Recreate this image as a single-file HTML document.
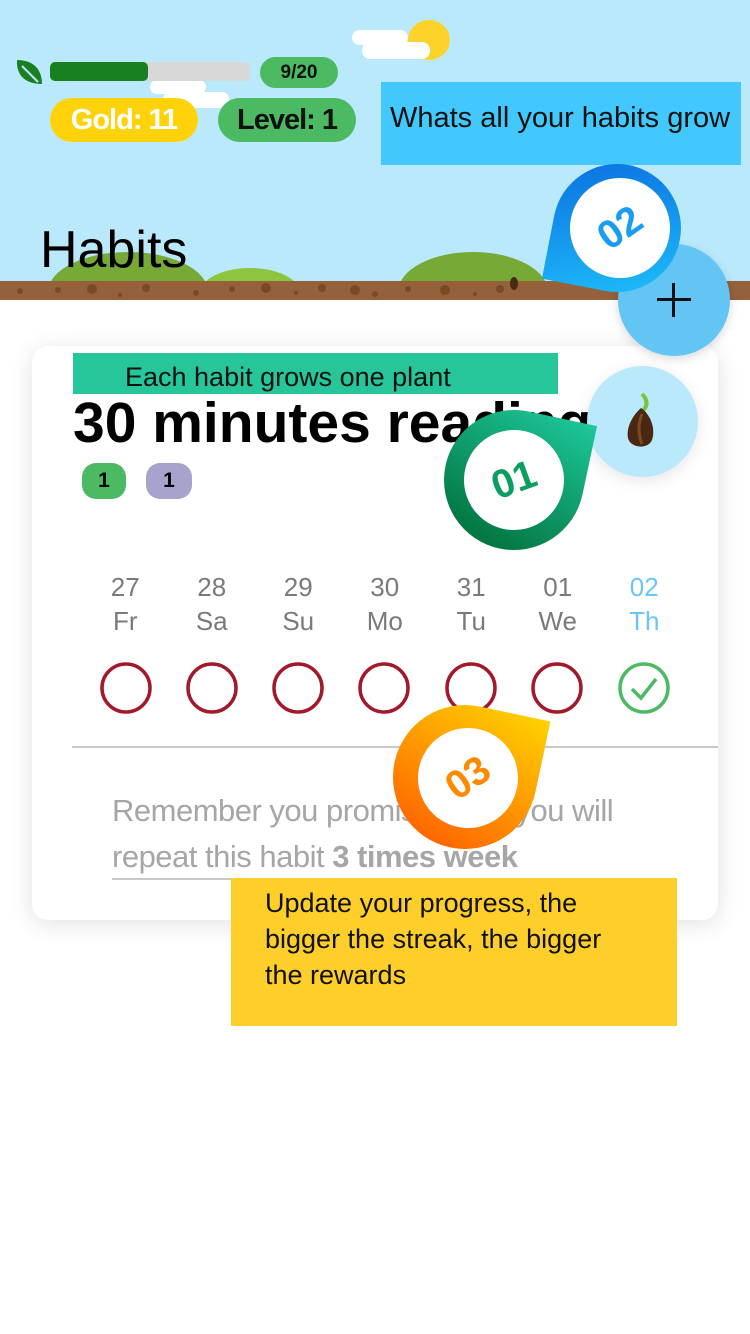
<!DOCTYPE html>
<html><head><meta charset="utf-8"><style>
*{margin:0;padding:0;box-sizing:border-box}
body{width:750px;height:1334px;position:relative;overflow:hidden;background:#fff;font-family:"Liberation Sans",sans-serif}
.abs{position:absolute}
.drop{position:absolute}
.inner{position:absolute;border-radius:50%;background:#fff;display:flex;align-items:center;justify-content:center;font-weight:bold;font-size:40px}
</style></head><body>
<div class="abs" style="left:0;top:0;width:750px;height:300px;background:#bbe9fc;overflow:hidden">
<div class="abs" style="left:408px;top:20px;width:42px;height:40px;border-radius:50%;background:#fdd22a"></div>
<div class="abs" style="left:352px;top:30px;width:56px;height:15px;border-radius:8px;background:#fff"></div>
<div class="abs" style="left:362px;top:42px;width:68px;height:17px;border-radius:8px;background:#fff"></div>
<div class="abs" style="left:150px;top:80px;width:56px;height:14px;border-radius:7px;background:#fff"></div>
<div class="abs" style="left:163px;top:92px;width:66px;height:16px;border-radius:7px;background:#fff"></div>
<div class="abs" style="left:48px;top:252px;width:160px;height:80px;border-radius:50%;background:#76a936"></div>
<div class="abs" style="left:200px;top:268px;width:100px;height:50px;border-radius:50%;background:#8cc63e"></div>
<div class="abs" style="left:398px;top:252px;width:150px;height:80px;border-radius:50%;background:#76a936"></div>
<div class="abs" style="left:0;top:281px;width:750px;height:19px;background:#94613a"></div>
<svg class="abs" style="left:0;top:281px" width="750" height="19"><g fill="#7a4a26"><circle cx="20" cy="10" r="3"/><circle cx="58" cy="9" r="3"/><circle cx="92" cy="8" r="5"/><circle cx="120" cy="14" r="2"/><circle cx="146" cy="7" r="4"/><circle cx="196" cy="12" r="3"/><circle cx="232" cy="8" r="3"/><circle cx="266" cy="7" r="5"/><circle cx="296" cy="12" r="2"/><circle cx="322" cy="7" r="4"/><circle cx="355" cy="9" r="5"/><circle cx="375" cy="13" r="3"/><circle cx="408" cy="8" r="3"/><circle cx="445" cy="9" r="5"/><circle cx="475" cy="13" r="2"/><circle cx="500" cy="8" r="4"/></g></svg>
<div class="abs" style="left:510px;top:277px;width:8px;height:13px;border-radius:50%;background:#4a2a12"></div>
</div>
<svg class="abs" style="left:14px;top:58px" width="30" height="28" viewBox="0 0 30 28"><path d="M3 2 C20 2 28 12 28 26 C12 26 2 18 3 2Z" fill="#198022"/><path d="M8 8 L24 24" stroke="#bbe9fc" stroke-width="2"/></svg>
<div class="abs" style="left:50px;top:62px;width:200px;height:19px;border-radius:5px;background:#d8d8d8"></div>
<div class="abs" style="left:50px;top:62px;width:98px;height:19px;border-radius:5px;background:#198022"></div>
<div class="abs" style="left:260px;top:57px;width:78px;height:31px;border-radius:16px;background:#4cb963;font-weight:bold;font-size:19px;text-align:center;line-height:31px;color:#111">9/20</div>
<div class="abs" style="left:50px;top:98px;width:148px;height:44px;border-radius:22px;background:#ffd20a;color:#fff;font-weight:bold;font-size:29px;text-align:center;line-height:44px;letter-spacing:-1px">Gold: 11</div>
<div class="abs" style="left:218px;top:98px;width:138px;height:44px;border-radius:22px;background:#4cb963;color:#111;font-weight:bold;font-size:29px;text-align:center;line-height:44px;letter-spacing:-1px">Level: 1</div>
<div class="abs" style="left:381px;top:82px;width:360px;height:83px;background:#42c8fc;font-size:29px;color:#111;padding:20px 0 0 9px;white-space:nowrap">Whats all your habits grow</div>
<div class="abs" style="left:40px;top:220px;font-size:52px;color:#000">Habits</div>
<div class="abs" style="left:32px;top:346px;width:686px;height:574px;border-radius:16px;background:#fff;box-shadow:0 4px 24px rgba(0,0,0,0.12)"></div>
<div class="abs" style="left:73px;top:353px;width:485px;height:41px;background:#27c59a;font-size:27px;color:#111;padding:9px 0 0 52px;white-space:nowrap">Each habit grows one plant</div>
<div class="abs" style="left:73px;top:390px;font-size:57px;font-weight:bold;color:#000">30 minutes reading</div>
<div class="abs" style="left:82px;top:463px;width:44px;height:36px;border-radius:14px;background:#4cb963;font-weight:bold;font-size:21px;text-align:center;line-height:36px">1</div>
<div class="abs" style="left:146px;top:463px;width:46px;height:36px;border-radius:14px;background:#a6a3cc;font-weight:bold;font-size:21px;text-align:center;line-height:36px">1</div>
<div class="abs" style="left:82px;top:570px;width:606px;display:flex;font-size:26px;color:#7a7a7a;text-align:center;line-height:34px">
<div style="width:86.5px">27<br>Fr</div><div style="width:86.5px">28<br>Sa</div><div style="width:86.5px">29<br>Su</div><div style="width:86.5px">30<br>Mo</div><div style="width:86.5px">31<br>Tu</div><div style="width:86.5px">01<br>We</div><div style="width:86.5px;color:#6bc6f3">02<br>Th</div></div>
<svg class="abs" style="left:0;top:655px" width="750" height="70">
<g fill="none" stroke="#a2192a" stroke-width="3.5">
<circle cx="126" cy="33" r="24"/><circle cx="212" cy="33" r="24"/><circle cx="298" cy="33" r="24"/><circle cx="384" cy="33" r="24"/><circle cx="471" cy="33" r="24"/><circle cx="557" cy="33" r="24"/></g>
<circle cx="644" cy="33" r="24" fill="none" stroke="#4cb963" stroke-width="3.5"/>
<path d="M632 34 L641 43 L656 24" fill="none" stroke="#4cb963" stroke-width="3.5"/>
</svg>
<div class="abs" style="left:72px;top:746px;width:646px;height:2px;background:#c8c8cc"></div>
<div class="abs" style="left:112px;top:788px;width:560px;font-size:31px;line-height:46px;color:#a6a6a6;letter-spacing:-0.5px">Remember you promised that you will repeat this habit <b>3 times week</b></div>
<div class="abs" style="left:112px;top:878px;width:560px;height:2px;background:#c8c8cc"></div>
<div class="abs" style="left:618px;top:244px;width:112px;height:112px;border-radius:50%;background:#62c5f3;box-shadow:0 3px 10px rgba(0,0,0,0.15)"></div>
<div class="abs" style="left:657px;top:298px;width:34px;height:3px;background:#111"></div>
<div class="abs" style="left:672px;top:283px;width:3px;height:34px;background:#111"></div>
<div class="abs" style="left:587px;top:366px;width:111px;height:111px;border-radius:50%;background:#bbe9fc;box-shadow:0 4px 16px rgba(0,0,0,0.1)"></div>
<svg class="abs" style="left:624px;top:392px" width="36" height="60" viewBox="0 0 36 60"><path d="M18 2 C24 8 24 14 18 20" stroke="#7cc23a" stroke-width="4" fill="none"/><path d="M17 16 C8 24 2 36 4 46 C6 56 24 58 28 48 C32 36 26 22 17 16Z" fill="#4a2710"/><path d="M18 22 C14 32 14 42 18 52" stroke="#7a4a22" stroke-width="3" fill="none"/></svg>
<div class="drop" style="left:553px;top:164px;width:128px;height:128px;border-radius:50% 50% 50% 0;background:linear-gradient(160deg,#0a6ee0,#1fc0fb);transform:rotate(11deg)"></div>
<div class="inner" style="left:570px;top:178px;width:100px;height:100px;color:#1a9cf0;transform:rotate(-35deg)">02</div>
<div class="drop" style="left:444px;top:410px;width:140px;height:140px;border-radius:50% 0 50% 50%;background:linear-gradient(200deg,#1dc79a,#006b35);transform:rotate(12deg)"></div>
<div class="inner" style="left:464px;top:430px;width:100px;height:100px;color:#0b9e60;transform:rotate(-20deg)">01</div>
<div class="drop" style="left:393px;top:705px;width:144px;height:144px;border-radius:50% 0 50% 50%;background:linear-gradient(200deg,#ffd200,#ff5a00);transform:rotate(12deg)"></div>
<div class="inner" style="left:418px;top:728px;width:100px;height:100px;color:#ff8a00;transform:rotate(-35deg)">03</div>
<div class="abs" style="left:231px;top:878px;width:446px;height:148px;background:#fecf2a;font-size:27px;line-height:36px;color:#111;padding:7px 60px 0 34px">Update your progress, the bigger the streak, the bigger the rewards</div>
</body></html>
